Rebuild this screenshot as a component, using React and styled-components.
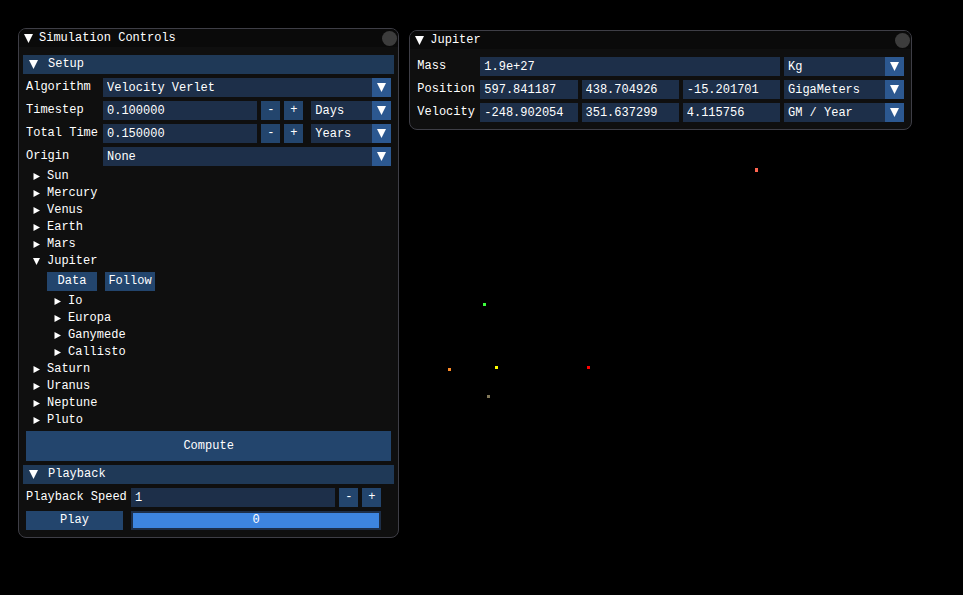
import React, { useId, useState } from "react";
import styled, { createGlobalStyle } from "styled-components";

const color = {
  window: "#0f0f0f",
  title: "#0a0a0a",
  border: "#3e3e46",
  frame: "#1d2f49",
  button: "#23456d",
  arrow: "#2c5890",
  header: "#1f3957",
  grab: "#3d85e0",
  close: "#3c3c3c",
};

const GlobalStyle = createGlobalStyle`
  *, *::before, *::after { box-sizing: border-box; }
  body { margin: 0; background: #000; }
  body, button, input, select {
    font-family: "Liberation Mono", monospace;
    font-size: 12px;
    line-height: 15px;
    color: #fff;
  }
`;

const Space = styled.main`
  position: relative;
  display: flex;
  align-items: flex-start;
  gap: 10px;
  min-height: 100vh;
  padding: 28px 51px 28px 18px;
`;

const Body3D = styled.span`
  position: absolute;
  left: ${(p) => p.$x}px;
  top: ${(p) => p.$y}px;
  width: 3px;
  height: ${(p) => p.$h || 3}px;
  background: ${(p) => p.$fill};
`;

const Window = styled.section`
  flex: ${(p) => p.$grow} 1 0;
  min-width: 0;
  margin-top: ${(p) => p.$drop || 0}px;
  background: ${color.window};
  border: 1px solid ${color.border};
  border-radius: 8px;
  overflow: hidden;
`;

const TitleBar = styled.header`
  display: flex;
  align-items: center;
  height: 18px;
  padding: 0 1px 0 5px;
  background: ${color.title};
`;

const Title = styled.h1`
  flex: 1;
  margin: 0;
  font-size: 12px;
  font-weight: 400;
  line-height: 18px;
`;

const Plain = styled.button`
  display: flex;
  align-items: center;
  padding: 0;
  border: 0;
  background: none;
  text-align: left;
  white-space: nowrap;
`;

const Collapse = styled(Plain)`
  width: 15px;
  height: 18px;
`;

const Close = styled.button`
  width: 15px;
  height: 15px;
  padding: 0;
  border: 0;
  border-radius: 50%;
  background: ${color.close};
`;

const Stack = styled.div`
  display: flex;
  flex-direction: column;
  gap: 4px;
  padding: 8px ${(p) => p.$side}px 7px;
`;

const SectionHeader = styled(Plain)`
  height: 19px;
  padding-left: 6px;
  gap: 10px;
  background: ${color.header};
`;

const Group = styled.div`
  display: flex;
  flex-direction: column;
  gap: 4px;
  padding: 0 ${(p) => p.$right || 3}px 0 3px;
`;

const FieldRow = styled.div`
  display: grid;
  grid-template-columns: ${(p) => p.$label}px minmax(0, 1fr);
  align-items: center;
  column-gap: ${(p) => p.$gap || 4}px;
`;

const VectorRow = styled.div`
  display: grid;
  grid-template-columns: 59px repeat(3, minmax(0, 1fr)) 120px;
  align-items: center;
  column-gap: 4px;
`;

const Label = styled.label`
  white-space: nowrap;
`;

const TextBox = styled.input`
  flex: 1;
  width: 100%;
  min-width: 0;
  height: 19px;
  padding: 0 4px;
  border: 0;
  border-radius: 0;
  background: ${color.frame};
  grid-column: span ${(p) => p.$span || 1};
`;

const Controls = styled.div`
  display: flex;
  gap: 4px;
`;

const Button = styled.button`
  height: ${(p) => p.$height || 19}px;
  padding: 0 4px;
  border: 0;
  background: ${color.button};
  text-align: center;
`;

const StepButton = styled(Button)`
  flex: none;
  width: 19px;
  padding: 0;
`;

const ComboBox = styled.div`
  display: grid;
  grid-template-columns: minmax(0, 1fr) 19px;
  height: 19px;
  background: ${color.frame};
`;

const Select = styled.select`
  grid-area: 1 / 1 / 2 / 3;
  width: 100%;
  height: 19px;
  padding: 1px 19px 0 4px;
  border: 0;
  border-radius: 0;
  appearance: none;
  background: none;
`;

const ComboArrow = styled.span`
  grid-area: 1 / 2 / 2 / 3;
  display: grid;
  place-items: center;
  background: ${color.arrow};
  pointer-events: none;
`;

const UnitSlot = styled.div`
  flex: none;
  width: 80px;
  margin-left: 4px;
`;

const Tree = styled.ul`
  display: flex;
  flex-direction: column;
  gap: 4px;
  margin: 0;
  padding: 0 0 0 ${(p) => p.$indent}px;
  list-style: none;
`;

const Node = styled.li`
  display: flex;
  flex-direction: column;
  gap: 4px;
`;

const NodeToggle = styled(Plain)`
  height: 13px;
  gap: 6px;
`;

const NodeActions = styled.div`
  display: flex;
  gap: 8px;
  padding-left: 14px;
`;

const NodeButton = styled(Button)`
  width: 50px;
  padding: 0;
`;

const Track = styled.div`
  display: grid;
  height: 19px;
  padding: 2px;
  background: ${color.frame};
`;

const Range = styled.input`
  grid-area: 1 / 1;
  appearance: none;
  width: 100%;
  height: 15px;
  margin: 0;
  background: none;
  &::-webkit-slider-thumb {
    appearance: none;
    width: 100%;
    height: 15px;
    background: ${color.grab};
  }
`;

const RangeValue = styled.output`
  grid-area: 1 / 1;
  z-index: 1;
  align-self: center;
  text-align: center;
  pointer-events: none;
`;

const Icon = styled.svg`
  display: block;
  flex: none;
  fill: #fff;
`;

const Down = () => (
  <Icon width="9" height="9" viewBox="0 0 9 9" aria-hidden="true">
    <path d="M0 0H9L4.5 9Z" />
  </Icon>
);

const NodeArrow = ({ open }) => (
  <Icon width="8" height="7" viewBox="0 0 8 7" aria-hidden="true">
    <path d={open ? "M0 0H7L3.5 7Z" : "M0.5 0V7L7 3.5Z"} />
  </Icon>
);

function Combo({ id, label, options }) {
  return (
    <ComboBox>
      <Select id={id} aria-label={label} defaultValue={options[0]}>
        {options.map((o) => (
          <option key={o}>{o}</option>
        ))}
      </Select>
      <ComboArrow>
        <Down />
      </ComboArrow>
    </ComboBox>
  );
}

function ComboField({ label, options }) {
  const id = useId();
  return (
    <FieldRow $label={73}>
      <Label htmlFor={id}>{label}</Label>
      <Combo id={id} options={options} />
    </FieldRow>
  );
}

function StepperField({ label, initial, step, digits, units, labelWidth }) {
  const id = useId();
  const [value, setValue] = useState(initial);
  const bump = (d) => setValue((v) => (Number(v) + d).toFixed(digits));
  return (
    <FieldRow $label={labelWidth}>
      <Label htmlFor={id}>{label}</Label>
      <Controls>
        <TextBox id={id} value={value} onChange={(e) => setValue(e.target.value)} />
        <StepButton aria-label={`Decrease ${label}`} onClick={() => bump(-step)}>-</StepButton>
        <StepButton aria-label={`Increase ${label}`} onClick={() => bump(step)}>+</StepButton>
        {units && (
          <UnitSlot>
            <Combo label={`${label} unit`} options={units} />
          </UnitSlot>
        )}
      </Controls>
    </FieldRow>
  );
}

function VectorField({ label, values, units }) {
  const id = useId();
  return (
    <VectorRow>
      <Label htmlFor={id}>{label}</Label>
      {values.map((v, i) => (
        <TextBox
          key={i}
          id={i === 0 ? id : undefined}
          aria-label={i === 0 ? undefined : `${label} ${"xyz"[i]}`}
          defaultValue={v}
          $span={values.length === 1 ? 3 : 1}
        />
      ))}
      <Combo label={`${label} unit`} options={units} />
    </VectorRow>
  );
}

function Panel({ title, grow, drop, side, children }) {
  const [open, setOpen] = useState(true);
  return (
    <Window $grow={grow} $drop={drop}>
      <TitleBar>
        <Collapse aria-label={`Collapse ${title}`} onClick={() => setOpen(!open)}>
          <Down />
        </Collapse>
        <Title>{title}</Title>
        <Close aria-label={`Close ${title}`} />
      </TitleBar>
      {open && <Stack $side={side}>{children}</Stack>}
    </Window>
  );
}

function TreeNode({ name, moons, initiallyOpen }) {
  const [open, setOpen] = useState(Boolean(initiallyOpen));
  return (
    <Node>
      <NodeToggle aria-expanded={open} onClick={() => setOpen(!open)}>
        <NodeArrow open={open} />
        {name}
      </NodeToggle>
      {open && (
        <NodeActions>
          <NodeButton>Data</NodeButton>
          <NodeButton>Follow</NodeButton>
        </NodeActions>
      )}
      {open && moons && (
        <Tree $indent={21}>
          {moons.map((m) => (
            <TreeNode key={m} name={m} />
          ))}
        </Tree>
      )}
    </Node>
  );
}

const planets = [
  { name: "Sun" },
  { name: "Mercury" },
  { name: "Venus" },
  { name: "Earth" },
  { name: "Mars" },
  { name: "Jupiter", moons: ["Io", "Europa", "Ganymede", "Callisto"], initiallyOpen: true },
  { name: "Saturn" },
  { name: "Uranus" },
  { name: "Neptune" },
  { name: "Pluto" },
];

const bodies = [
  { x: 755, y: 168, h: 4, fill: "#ff6450" },
  { x: 483, y: 303, fill: "#3cff3c" },
  { x: 448, y: 368, fill: "#ff8c28" },
  { x: 495, y: 366, fill: "#ffff00" },
  { x: 587, y: 366, fill: "#ff0000" },
  { x: 487, y: 395, fill: "#82785a" },
];

export default function App() {
  const [frame, setFrame] = useState(0);
  return (
    <>
      <GlobalStyle />
      <Space>
        {bodies.map((b) => (
          <Body3D key={b.fill} $x={b.x} $y={b.y} $h={b.h} $fill={b.fill} />
        ))}
        <Panel title="Simulation Controls" grow={381} side={4}>
          <SectionHeader>
            <Down />
            Setup
          </SectionHeader>
          <Group>
            <ComboField label="Algorithm" options={["Velocity Verlet"]} />
            <StepperField label="Timestep" labelWidth={73} initial="0.100000" step={0.1} digits={6} units={["Days", "Years"]} />
            <StepperField label="Total Time" labelWidth={73} initial="0.150000" step={0.1} digits={6} units={["Years", "Days"]} />
            <ComboField label="Origin" options={["None"]} />
            <Tree $indent={7}>
              {planets.map((p) => (
                <TreeNode key={p.name} {...p} />
              ))}
            </Tree>
            <Button $height={30}>Compute</Button>
          </Group>
          <SectionHeader>
            <Down />
            Playback
          </SectionHeader>
          <Group $right={13}>
            <StepperField label="Playback Speed" labelWidth={101} initial="1" step={1} digits={0} />
            <FieldRow $label={97} $gap={8}>
              <Button>Play</Button>
              <Track>
                <Range
                  type="range"
                  aria-label="Frame"
                  min="0"
                  max="0"
                  value={frame}
                  onChange={(e) => setFrame(Number(e.target.value))}
                />
                <RangeValue>{frame}</RangeValue>
              </Track>
            </FieldRow>
          </Group>
        </Panel>
        <Panel title="Jupiter" grow={503} drop={2} side={7}>
          <VectorField label="Mass" values={["1.9e+27"]} units={["Kg"]} />
          <VectorField label="Position" values={["597.841187", "438.704926", "-15.201701"]} units={["GigaMeters"]} />
          <VectorField label="Velocity" values={["-248.902054", "351.637299", "4.115756"]} units={["GM / Year"]} />
        </Panel>
      </Space>
    </>
  );
}
